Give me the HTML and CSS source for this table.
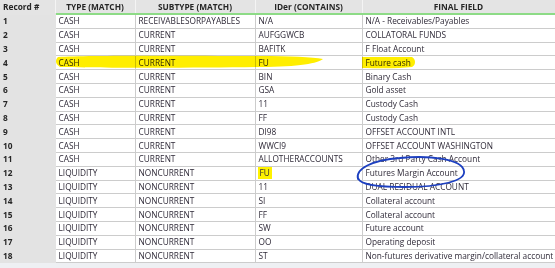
FILE: index.html
```html
<!DOCTYPE html>
<html>
<head>
<meta charset="utf-8">
<link rel="stylesheet" href="styles.css">
</head>
<body>
<div class="sheet">
  <table class="grid">
    <colgroup>
      <col class="c-rec"><col class="c-type"><col class="c-sub"><col class="c-id"><col class="c-final">
    </colgroup>
    <thead>
      <tr>
        <th class="rec">Record #</th>
        <th>TYPE (MATCH)</th>
        <th>SUBTYPE (MATCH)</th>
        <th>IDer (CONTAINS)</th>
        <th>FINAL FIELD</th>
      </tr>
    </thead>
    <tbody>
      <tr><td class="rec">1</td><td>CASH</td><td>RECEIVABLESORPAYABLES</td><td>N/A</td><td>N/A - Receivables/Payables</td></tr>
      <tr><td class="rec">2</td><td>CASH</td><td>CURRENT</td><td>AUFGGWCB</td><td>COLLATORAL FUNDS</td></tr>
      <tr><td class="rec">3</td><td>CASH</td><td>CURRENT</td><td>BAFITK</td><td>F Float Account</td></tr>
      <tr><td class="rec">4</td><td>CASH</td><td>CURRENT</td><td>FU</td><td>Future cash</td></tr>
      <tr><td class="rec">5</td><td>CASH</td><td>CURRENT</td><td>BIN</td><td>Binary Cash</td></tr>
      <tr><td class="rec">6</td><td>CASH</td><td>CURRENT</td><td>GSA</td><td>Gold asset</td></tr>
      <tr><td class="rec">7</td><td>CASH</td><td>CURRENT</td><td>11</td><td>Custody Cash</td></tr>
      <tr><td class="rec">8</td><td>CASH</td><td>CURRENT</td><td>FF</td><td>Custody Cash</td></tr>
      <tr><td class="rec">9</td><td>CASH</td><td>CURRENT</td><td>DI98</td><td>OFFSET ACCOUNT INTL</td></tr>
      <tr><td class="rec">10</td><td>CASH</td><td>CURRENT</td><td>WWCI9</td><td>OFFSET ACCOUNT WASHINGTON</td></tr>
      <tr><td class="rec">11</td><td>CASH</td><td>CURRENT</td><td>ALLOTHERACCOUNTS</td><td>Other 3rd Party Cash Account</td></tr>
      <tr><td class="rec">12</td><td>LIQUIDITY</td><td>NONCURRENT</td><td><span class="mark">FU</span></td><td>Futures Margin Account</td></tr>
      <tr><td class="rec">13</td><td>LIQUIDITY</td><td>NONCURRENT</td><td>11</td><td>DUAL RESIDUAL ACCOUNT</td></tr>
      <tr><td class="rec">14</td><td>LIQUIDITY</td><td>NONCURRENT</td><td>SI</td><td>Collateral account</td></tr>
      <tr><td class="rec">15</td><td>LIQUIDITY</td><td>NONCURRENT</td><td>FF</td><td>Collateral account</td></tr>
      <tr><td class="rec">16</td><td>LIQUIDITY</td><td>NONCURRENT</td><td>SW</td><td>Future account</td></tr>
      <tr><td class="rec">17</td><td>LIQUIDITY</td><td>NONCURRENT</td><td>OO</td><td>Operating deposit</td></tr>
      <tr><td class="rec">18</td><td>LIQUIDITY</td><td>NONCURRENT</td><td>ST</td><td>Non-futures derivative margin/collateral account</td></tr>
    </tbody>
  </table>
  <svg class="ink" width="555" height="268" viewBox="0 0 555 268">
    <path class="hl" d="M58 57 C90 55 200 56 260 56 C290 56 312 57 323 59 C318 63 300 67 260 67 C200 68 100 68 60 67 C55 64 55 60 58 57 Z"/>
    <path class="hl" d="M362 57 L412 57 C416 59 416 65 412 67 C395 69 375 68 362 68 Z"/>
    <path class="circle" d="M358 179 C355 169 372 160 400 158 C430 155 462 159 464 171 C466 181 440 187 405 187 C378 187 360 185 358 178"/>
  </svg>
</div>
</body>
</html>
```

FILE: styles.css
```css
html, body {
  margin: 0;
  padding: 0;
  background: #eef0f3;
}

.sheet {
  position: relative;
  width: 555px;
  height: 268px;
  overflow: hidden;
  background: #eef0f3;
}

.grid {
  border-collapse: collapse;
  table-layout: fixed;
  width: 555px;
  font-family: "Open Sans", "Noto Sans", sans-serif;
  font-size: 8.3px;
  color: #2f2a38;
  background: #d6d6d6;
}

.c-rec { width: 55px; }
.c-type { width: 80px; }
.c-sub { width: 120px; }
.c-id { width: 107px; }
.c-final { width: 193px; }

.grid th {
  height: 13px;
  padding: 0;
  background: #e4e4e4;
  font-weight: 700;
  color: #262626;
  text-align: center;
  border-right: 1px solid #f4f4f4;
  border-bottom: 2px solid #8ddb86;
  white-space: nowrap;
  line-height: 13px;
}

.grid th.rec {
  text-align: left;
  padding-left: 3px;
  border-bottom: 2px solid #e4e4e4;
}

.grid td {
  height: 12.8px;
  padding: 0 0 0 3px;
  background: #ffffff;
  border-right: 1px solid #cccccc;
  border-bottom: 1px solid #cccccc;
  white-space: nowrap;
  overflow: hidden;
  line-height: 12px;
}

.grid td.rec {
  background: #e3e3e3;
  font-weight: 700;
  color: #262626;
  border-right: 1px solid #e3e3e3;
  border-bottom: 1px solid #e3e3e3;
}

.mark {
  background: #fff200;
  padding: 1px 2px;
  margin-left: -1px;
}

.ink {
  position: absolute;
  left: 0;
  top: 0;
  pointer-events: none;
}

.hl {
  fill: #ffee00;
  mix-blend-mode: multiply;
}

.circle {
  fill: none;
  stroke: #1c3fc0;
  stroke-width: 1.8;
  stroke-linecap: round;
}
```
